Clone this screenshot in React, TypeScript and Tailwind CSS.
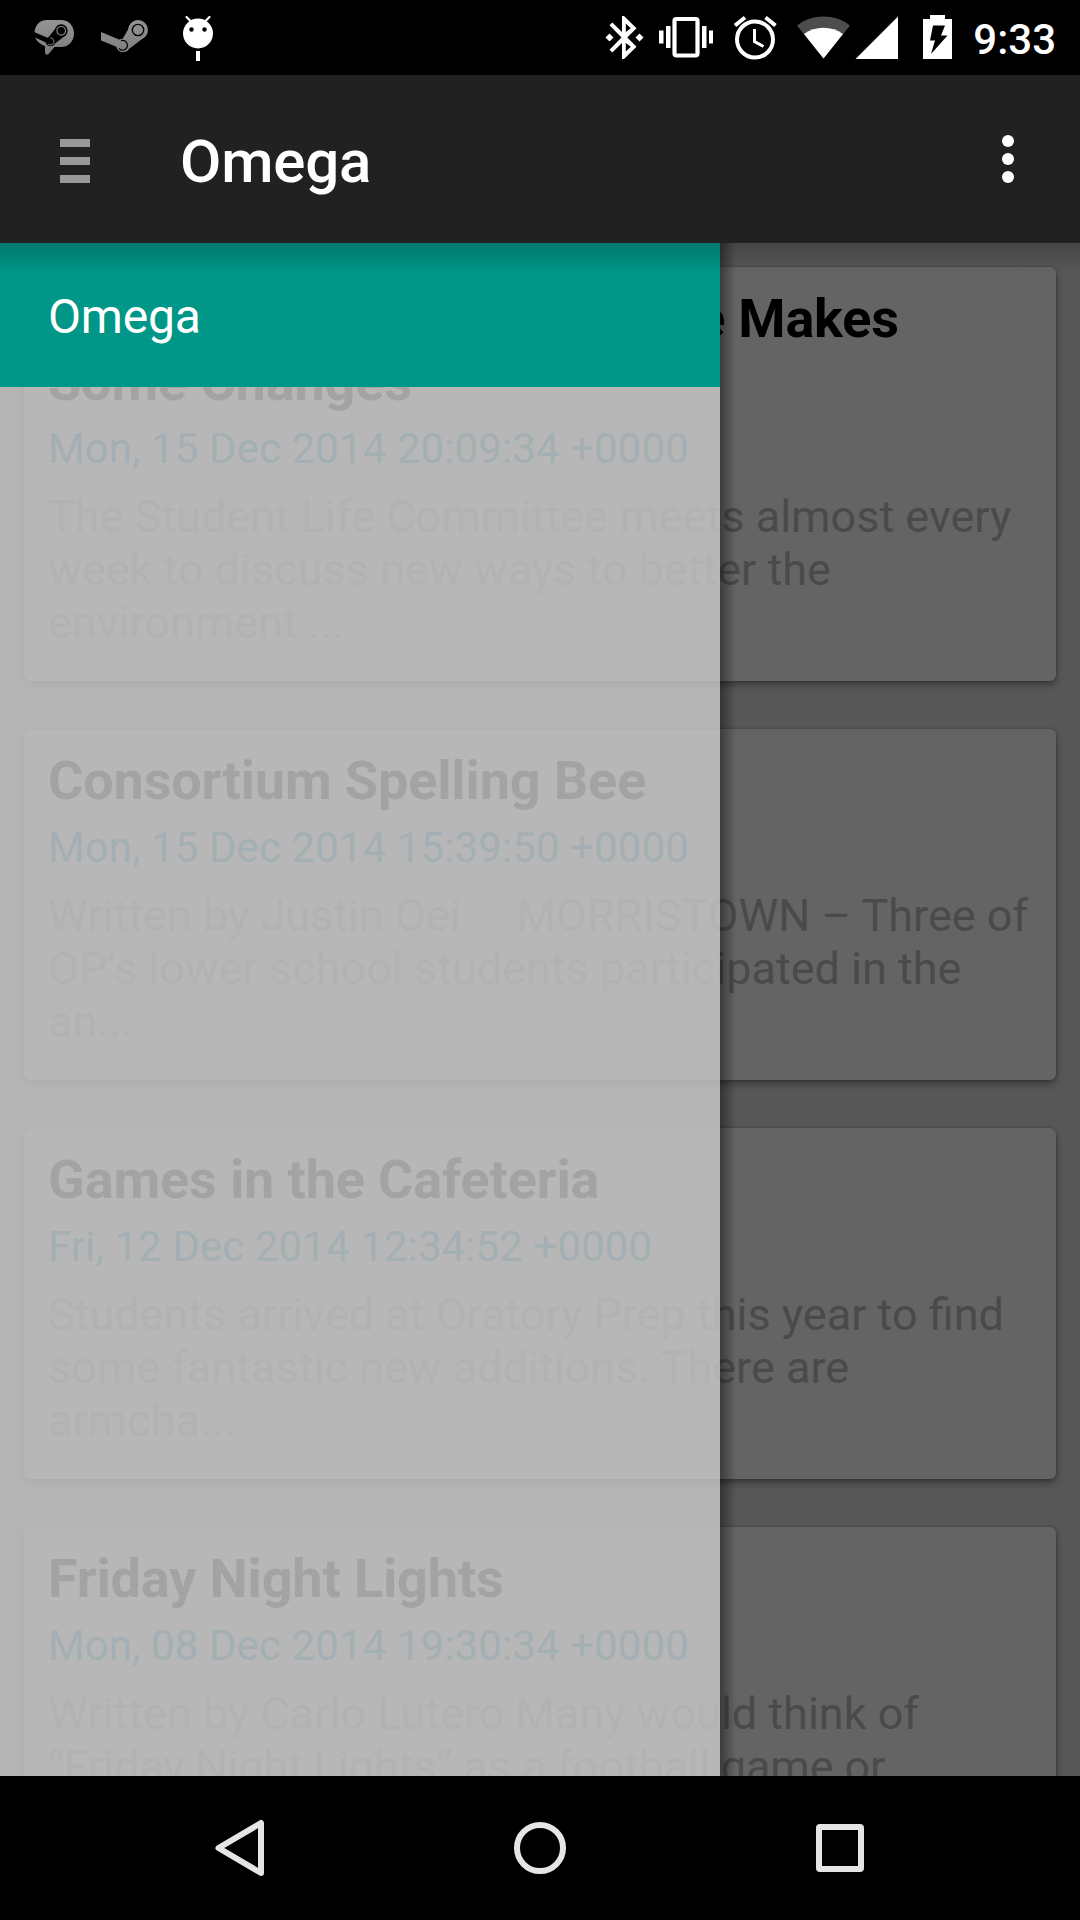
import React from "react";

type Story = { title: string[]; date: string; body: string[] };

const stories: Story[] = [
  {
    title: ["The Student Life Committee Makes", "Some Changes"],
    date: "Mon, 15 Dec 2014 20:09:34 +0000",
    body: ["The Student Life Committee meets almost every", "week to discuss new ways to better the", "environment ..."],
  },
  {
    title: ["Consortium Spelling Bee"],
    date: "Mon, 15 Dec 2014 15:39:50 +0000",
    body: ["Written by Justin Oei \u00a0 \u00a0 MORRISTOWN – Three of", "OP’s lower school students participated in the", "an..."],
  },
  {
    title: ["Games in the Cafeteria"],
    date: "Fri, 12 Dec 2014 12:34:52 +0000",
    body: ["Students arrived at Oratory Prep this year to find", "some fantastic new additions. There are", "armcha..."],
  },
  {
    title: ["Friday Night Lights"],
    date: "Mon, 08 Dec 2014 19:30:34 +0000",
    body: ["Written by Carlo Lutero Many would think of", "“Friday Night Lights” as a football game or"],
  },
];

function Card({ story }: { story: Story }) {
  return (
    <article className="shrink-0 rounded-[6px] bg-[#646464] px-6 pt-5 pb-8 whitespace-nowrap shadow-[0_4px_7px_rgba(0,0,0,0.34),0_0_3px_rgba(0,0,0,0.25)]">
      <h2 className="text-[54px] leading-[63px] font-bold text-black">
        {story.title.map((l) => (
          <div key={l} className={l.length > 30 ? "tracking-[-0.22px]" : "tracking-[-0.14px]"}>
            {l}
          </div>
        ))}
      </h2>
      <div className="mt-[11px] text-[42px] leading-[49px] tracking-[0.1px] text-[#003d52]">{story.date}</div>
      <div className="mt-[17px] text-[45px] leading-[53px] text-[#4a4a4a]">
        {story.body.map((l) => (
          <div key={l} className={l.startsWith("“") ? "tracking-[-0.11px]" : ""}>
            {l}
          </div>
        ))}
      </div>
    </article>
  );
}

function StatusBar() {
  return (
    <header className="relative h-[75px] shrink-0 bg-black">
      <svg className="block" width="1080" height="75" viewBox="0 0 1080 75" fill="none">
        <defs>
          <linearGradient id="steam" x1="0" y1="20" x2="0" y2="55" gradientUnits="userSpaceOnUse">
            <stop stopColor="#949494" />
            <stop offset="1" stopColor="#7c7c7c" />
          </linearGradient>
        </defs>
        <path d="M47 20H61C69 20 74 26 74 33.500C74 41 69 47 61 47H54.500L49 53.500Q45 56.500 45 52V46C39 44 34.500 39.500 34.500 33.500C34.500 26 39 20 47 20Z" fill="url(#steam)" />
        <path d="M34 32L48 38L55 29L63.500 37L53 45L48 43.500L34 37Z" fill="#000" />
        <circle cx="61.200" cy="30.800" r="6.500" fill="#000" />
        <circle cx="50.500" cy="41.500" r="4.800" fill="#000" />
        <circle cx="61.200" cy="30.800" r="4.300" stroke="#858585" strokeWidth="1.200" />
        <path d="M48 44A3.500 3.500 0 1 0 50 38" stroke="#858585" strokeWidth="1" />
        <path d="M101 32L119 39.500L122 40L130 26L144 37.500L127 50.500L117 47L101 40.500Z" fill="url(#steam)" />
        <circle cx="138" cy="30" r="10" fill="url(#steam)" />
        <circle cx="123" cy="45.500" r="6.800" fill="url(#steam)" />
        <circle cx="138" cy="30" r="5.700" stroke="#000" strokeWidth="1.300" />
        <path d="M119 48.500A4.800 4.800 0 1 0 121 40.700" stroke="#000" strokeWidth="1.200" />
        <circle cx="198" cy="33.500" r="15" fill="#fff" />
        <path d="M186.500 17L191 21.500M209.500 17L205 21.500" stroke="#fff" strokeWidth="2.200" strokeLinecap="round" />
        <circle cx="191.500" cy="29.500" r="2.200" fill="#000" />
        <circle cx="204.500" cy="29.500" r="2.200" fill="#000" />
        <path d="M196 51H200V61H196Z" fill="#fff" />
        <path
          d="M622 16H624L636.500 28.300L627.300 37.500L636.500 46.700L624 59H622V43L612.300 52.500L609.500 49.700L621.500 37.500L609.500 25.300L612.300 22.500L622 32ZM625.800 23.500V32L630.800 28.300ZM625.800 43V51.500L630.800 46.700Z"
          fill="#fff"
          fillRule="evenodd"
        />
        <path d="M609.500 33.500L613.500 37.500L609.500 41.500L605.500 37.500ZM639.500 33.500L643.500 37.500L639.500 41.500L635.500 37.500Z" fill="#fff" />
        <rect x="674.500" y="19" width="23" height="36.500" rx="2" stroke="#fff" strokeWidth="4.200" />
        <path d="M659 30.500H663.500V43.500H659ZM666 26H670.500V48H666ZM702 26H706.500V48H702ZM709 30.500H713V43.500H709Z" fill="#fff" />
        <circle cx="755" cy="39.500" r="18" stroke="#fff" strokeWidth="4" />
        <path d="M754.500 29V41.500L763.500 46.500" stroke="#fff" strokeWidth="3" />
        <path d="M735 25.500L745 17.500M775.500 25.500L765.500 17.500" stroke="#fff" strokeWidth="4" />
        <path d="M797 25.500C812 13.500 835 13.500 850 25.500L823.500 58.500Z" fill="#4d4d4d" />
        <path d="M804 34C815 25.500 832 25.500 843 34L823.500 58.500Z" fill="#fff" />
        <path d="M898 16.500V59H855.500Z" fill="#fff" />
        <path d="M923 19H930V15H945V19H952V59H923Z" fill="#fff" />
        <path d="M933 25.500H945L941 35.500H947.500L931 54L935 40.500H930Z" fill="#000" />
      </svg>
      <span className="absolute top-[15px] right-6 text-[42px] leading-[49px] font-medium text-white">9:33</span>
    </header>
  );
}

export default function App() {
  return (
    <div className="flex h-[1920px] w-[1080px] flex-col overflow-hidden bg-black font-[Roboto,sans-serif]">
      <StatusBar />
      <div className="flex h-[168px] shrink-0 items-center bg-[#212121] pr-[66px] pl-[60px]">
        <div className="flex flex-col gap-[10px] pt-1">
          <div className="h-2 w-[30px] bg-[#999]" />
          <div className="h-2 w-[30px] bg-[#999]" />
          <div className="h-2 w-[30px] bg-[#999]" />
        </div>
        <h1 className="ml-[90px] pt-[5px] text-[60px] leading-[70px] font-medium tracking-[-0.2px] text-white">Omega</h1>
        <div className="ml-auto flex flex-col gap-[6px]">
          <div className="size-3 rounded-full bg-white" />
          <div className="size-3 rounded-full bg-white" />
          <div className="size-3 rounded-full bg-white" />
        </div>
      </div>
      <main className="relative h-[1533px] shrink-0 overflow-hidden bg-[#575757]">
        <div className="flex flex-col gap-12 px-6 pt-6">
          {stories.map((s) => (
            <Card key={s.date} story={s} />
          ))}
        </div>
        <aside className="absolute inset-y-0 left-0 w-[720px] bg-[#cccccc]/80">
          <div className="flex h-36 items-center bg-[#009688] pt-1 pl-12 text-[48px] leading-[56px] tracking-[-0.2px] text-white">Omega</div>
        </aside>
        <div className="absolute inset-y-0 left-[720px] w-4 bg-linear-to-r from-black/40 to-transparent" />
        <div className="absolute inset-x-0 top-0 h-[30px] bg-linear-to-b from-black/20 to-transparent" />
      </main>
      <nav className="flex h-36 shrink-0 items-center bg-black">
        <svg className="block" width="1080" height="144" viewBox="0 0 1080 144" fill="none" stroke="#e5e5e5" strokeWidth="6" strokeLinejoin="round">
          <path d="M218.500 72L261 47V97Z" />
          <circle cx="540" cy="72" r="23" />
          <rect x="819" y="51" width="42" height="42" rx="1" />
        </svg>
      </nav>
    </div>
  );
}
